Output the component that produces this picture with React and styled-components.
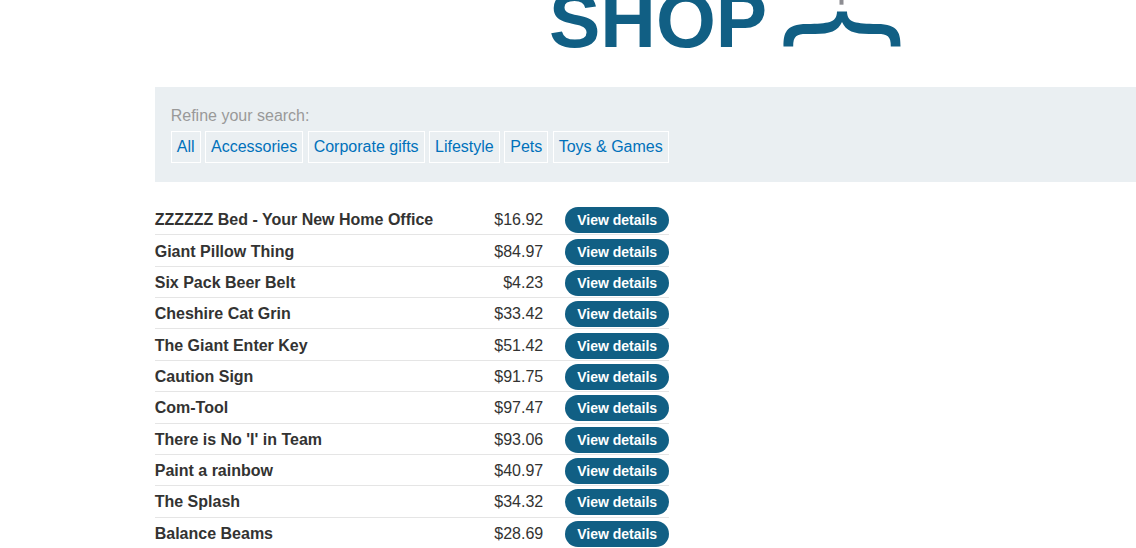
import React, { Fragment } from "react";
import styled, { createGlobalStyle } from "styled-components";

const brand = "#115f84";

const GlobalStyle = createGlobalStyle`
  body {
    margin: 0;
    overflow-x: hidden;
    background: #fff;
    color: #333332;
    font: 16px/24px "Liberation Sans", Arial, sans-serif;
  }
`;

const Page = styled.main`
  margin-left: 13.62%;
`;

const Header = styled.header`
  padding: 0 0 39px 394px;
`;

const Logo = styled.svg`
  display: block;
  width: 352px;
  height: 48px;
`;

const LogoText = styled.text`
  font: bold 77px "Liberation Sans", Arial, sans-serif;
  fill: ${brand};
`;

const Filters = styled.nav`
  padding: 16px 16px 19px;
  background: #eaeff2;
`;

const FilterLabel = styled.div`
  height: 28px;
  color: #999;
  line-height: 26px;
`;

const FilterLink = styled.a`
  display: inline-block;
  padding: 3px 5px;
  border: 1px solid #fff;
  color: #0071bb;
  text-decoration: none;
`;

const ProductTable = styled.table`
  height: 345px;
  margin-top: 22px;
  border-collapse: separate;
  border-spacing: 0;
`;

const Cell = styled.td`
  padding: 2px 0 0;
  border-bottom: 1px solid #e5e5e5;
  white-space: nowrap;
`;

const NameCell = styled(Cell)`
  padding-right: 61px;
  font-weight: bold;
  text-align: left;
`;

const PriceCell = styled(Cell)`
  padding-right: 22px;
  text-align: right;
`;

const DetailsLink = styled.a`
  display: block;
  padding: 0 12px;
  border-radius: 13px;
  background: ${brand};
  color: #fff;
  font-size: 14px;
  font-weight: bold;
  line-height: 26px;
  text-decoration: none;
`;

const categories = ["All", "Accessories", "Corporate gifts", "Lifestyle", "Pets", "Toys & Games"];

const products = [
  ["ZZZZZZ Bed - Your New Home Office", "$16.92"],
  ["Giant Pillow Thing", "$84.97"],
  ["Six Pack Beer Belt", "$4.23"],
  ["Cheshire Cat Grin", "$33.42"],
  ["The Giant Enter Key", "$51.42"],
  ["Caution Sign", "$91.75"],
  ["Com-Tool", "$97.47"],
  ["There is No 'I' in Team", "$93.06"],
  ["Paint a rainbow", "$40.97"],
  ["The Splash", "$34.32"],
  ["Balance Beams", "$28.69"],
];

export default function App() {
  return (
    <>
      <GlobalStyle />
      <Page>
        <Header>
          <Logo viewBox="0 0 352 48" role="img" aria-label="Shop">
            <LogoText x="0" y="47">SHOP</LogoText>
            <path d="M290.5 0h4v4.7h-4z" fill="#8d8d92" />
            <path
              d="M234.5 46.4C234.5 34 236 24 258 24C279 23.5 287.8 23 288 11.5H298C298.2 23 307 23.5 328 24C350 24 351.5 34 351.5 46.4H341.8C342 36 338 34 329 34H320C305 34 297 31 293 22C289 31 281 34 266 34H257C248 34 244 36 244.2 46.4Z"
              fill={brand}
            />
          </Logo>
        </Header>
        <Filters aria-label="Categories">
          <FilterLabel>Refine your search:</FilterLabel>
          {categories.map((name) => (
            <Fragment key={name}>
              <FilterLink href="#">{name}</FilterLink>{" "}
            </Fragment>
          ))}
        </Filters>
        <ProductTable>
          <tbody>
            {products.map(([name, price]) => (
              <tr key={name}>
                <NameCell as="th" scope="row">{name}</NameCell>
                <PriceCell>{price}</PriceCell>
                <Cell>
                  <DetailsLink href="#">View details</DetailsLink>
                </Cell>
              </tr>
            ))}
          </tbody>
        </ProductTable>
      </Page>
    </>
  );
}
